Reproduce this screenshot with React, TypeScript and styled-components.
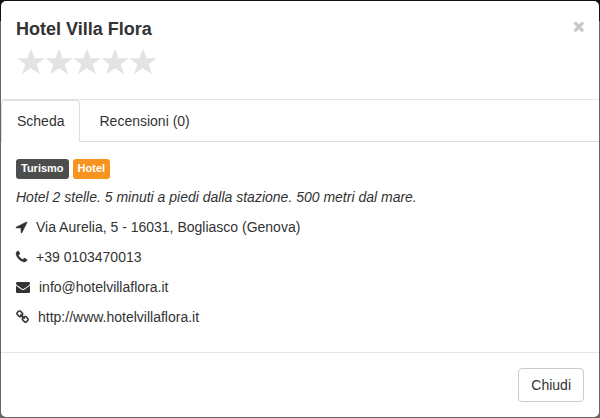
import React from "react";
import styled, { createGlobalStyle } from "styled-components";

const GlobalStyle = createGlobalStyle`
  *, *::before, *::after { box-sizing: border-box; }
  body {
    margin: 0;
    background: linear-gradient(#111 0 21px, #666 21px) no-repeat #666;
    color: #333;
    font-family: "Liberation Sans", Arial, sans-serif;
    font-size: 14px;
    line-height: 20px;
  }
`;

const Dialog = styled.section`
  margin: 1px;
  background: #fff;
  border-radius: 5px;
`;

const Header = styled.header`
  display: flex;
  justify-content: space-between;
  align-items: flex-start;
  padding: 15px 15px 19px;
  border-bottom: 1px solid #e5e5e5;
`;

const Title = styled.h4`
  margin: 0;
  font-size: 18px;
  line-height: 26px;
  font-weight: 700;
`;

const Stars = styled.div`
  display: flex;
  padding: 4px 0;
`;

const Star = styled.svg`
  display: block;
  width: 28px;
  height: 30px;
  overflow: visible;
  fill: #e3e3e3;
`;

const CloseButton = styled.button`
  padding: 0;
  border: 0;
  background: none;
  color: #c8c8c8;
  font: 700 18px/22px "Liberation Sans", Arial, sans-serif;
  -webkit-text-stroke: 1px #c8c8c8;
  cursor: pointer;
`;

const Tabs = styled.div`
  display: flex;
  gap: 3px;
  border-bottom: 1px solid #ddd;
`;

const Tab = styled.button<{ $active?: boolean }>`
  margin-bottom: -1px;
  padding: 10px 15px;
  border: 1px solid ${(p) => (p.$active ? "#ddd" : "transparent")};
  border-bottom-color: ${(p) => (p.$active ? "#fff" : "transparent")};
  border-radius: 4px 4px 0 0;
  background: ${(p) => (p.$active ? "#fff" : "transparent")};
  color: #333;
  font: inherit;
  cursor: pointer;
`;

const Panel = styled.div`
  padding: 17px 15px 25px;
`;

const Labels = styled.div`
  display: flex;
  gap: 4px;
  margin-bottom: 8px;
`;

const Label = styled.span<{ $color: string }>`
  padding: 0 5px 1px;
  border-radius: 3px;
  background: ${(p) => p.$color};
  color: #fff;
  font-size: 11px;
  line-height: 19px;
  font-weight: 700;
`;

const Details = styled.div`
  display: flex;
  flex-direction: column;
  gap: 10px;
`;

const Description = styled.p`
  margin: 0;
  font-style: italic;
`;

const Contact = styled.div`
  display: flex;
  align-items: center;
  gap: 9px;
`;

const ContactIcon = styled.svg`
  flex: none;
  height: 14px;
  overflow: visible;
  fill: currentColor;
  stroke: currentColor;
`;

const ContactLink = styled.a`
  color: inherit;
  text-decoration: none;
`;

const Footer = styled.footer`
  display: flex;
  justify-content: flex-end;
  padding: 15px;
  border-top: 1px solid #e5e5e5;
`;

const Button = styled.button`
  padding: 6px 12px;
  border: 1px solid #ccc;
  border-radius: 4px;
  background: #fff;
  color: #333;
  font: inherit;
  cursor: pointer;
`;

const icons = {
  arrow: {
    width: 11,
    stroke: 60,
    viewBox: "192 0 1408 1792",
    d: "M1593 349l-640 1280q-17 35-57 35-5 0-15-2-22-5-35.500-22.500t-13.500-39.500v-576h-576q-22 0-39.500-13.500t-22.500-35.500 4-42 29-30l1280-640q13-7 29-7 27 0 45 19 15 14 18.500 34.500t-6.500 39.500z",
  },
  phone: {
    width: 11,
    stroke: 40,
    viewBox: "192 0 1408 1792",
    d: "M1600 1240q0 27-10 70.500t-21 68.500q-21 50-122 106-94 51-186 51-27 0-53-3.500t-57.500-12.500-47-14.500-55.500-20.500-49-18q-98-35-175-83-127-79-264-216t-216-264q-48-77-83-175-3-9-18-49t-20.500-55.500-14.500-47-12.500-57.500-3.500-53q0-92 51-186 56-101 106-122 25-11 68.500-21t70.500-10q14 0 21 3 18 6 53 76 11 19 30 54t35 63.500 31 53.500q3 4 17.500 25t21.500 35.500 7 28.500q0 20-28.500 50t-62 55-62 53-28.500 46q0 9 5 22.500t8.500 20.500 14 24 11.500 19q76 137 174 235t235 174q2 1 19 11.500t24 14 20.500 8.500 22.500 5q18 0 46-28.500t53-62 55-62 50-28.500q14 0 28.500 7t35.500 21.500 25 17.500q25 15 53.500 31t63.500 35 54 30q70 35 76 53 3 7 3 21z",
  },
  envelope: {
    width: 14,
    stroke: 0,
    viewBox: "0 0 1792 1792",
    d: "M1792 710v794q0 66-47 113t-113 47h-1472q-66 0-113-47t-47-113v-794q44 49 101 87 362 246 497 345 57 42 92.500 65.500t94.500 48 110 24.500h2q51 0 110-24.500t94.500-48 92.500-65.500q170-123 498-345 57-39 100-87zm0-294q0 79-49 151t-122 123q-376 261-468 325-10 7-42.500 31t-54 38.500-52 32.500-57.500 27-50 9h-2q-23 0-50-9t-57.500-27-52-32.500-54-38.500-42.500-31q-91-64-262-182.500t-205-142.500q-62-42-117-115.500t-55-136.500q0-78 41.500-130t118.500-52h1472q65 0 112.500 47t47.500 113z",
  },
  chain: {
    width: 13,
    stroke: 20,
    viewBox: "64 0 1664 1792",
    d: "M1520 1216q0-40-28-68l-208-208q-28-28-68-28-42 0-72 32 3 3 19 18.500t21.500 21.500 15 19 13 25.500 3.500 27.500q0 40-28 68t-68 28q-15 0-27.500-3.500t-25.500-13-19-15-21.500-21.500-18.500-19q-33 31-33 73 0 40 28 68l206 207q27 27 68 27 40 0 68-26l147-146q28-28 28-67zm-703-705q0-40-28-68l-206-207q-28-28-68-28-39 0-68 27l-147 146q-28 28-28 67 0 40 28 68l208 208q27 27 68 27 42 0 72-31-3-3-19-18.500t-21.500-21.500-15-19-13-25.500-3.500-27.500q0-40 28-68t68-28q15 0 27.500 3.500t25.500 13 19 15 21.500 21.500 18.500 19q33-31 33-73zm895 705q0 120-85 203l-147 146q-83 83-203 83-121 0-204-85l-206-207q-83-83-83-203 0-123 88-209l-88-88q-86 88-208 88-120 0-204-84l-208-208q-84-84-84-204t85-203l147-146q83-83 203-83 121 0 204 85l206 207q83 83 83 203 0 123-88 209l88 88q86-88 208-88 120 0 204 84l208 208q84 84 84 204z",
  },
};

function Icon({ name }: { name: keyof typeof icons }) {
  const { width, stroke, viewBox, d } = icons[name];
  return (
    <ContactIcon width={width} viewBox={viewBox} strokeWidth={stroke} aria-hidden="true">
      <path d={d} />
    </ContactIcon>
  );
}

export default function App() {
  return (
    <>
      <GlobalStyle />
      <Dialog role="dialog" aria-labelledby="hotel-title">
        <Header>
          <div>
            <Title id="hotel-title">Hotel Villa Flora</Title>
            <Stars role="img" aria-label="0 / 5">
              {[1, 2, 3, 4, 5].map((n) => (
                <Star key={n} viewBox="0 0 28 30">
                  <path d="M15 2.500L18.500 12.200H29L20.600 18.300L24 28.200L15 22.200L6 28.200L9.400 18.300L1 12.200H11.500Z" />
                </Star>
              ))}
            </Stars>
          </div>
          <CloseButton type="button" aria-label="Chiudi">×</CloseButton>
        </Header>
        <Tabs role="tablist">
          <Tab type="button" role="tab" id="tab-scheda" aria-selected="true" aria-controls="panel-scheda" $active>
            Scheda
          </Tab>
          <Tab type="button" role="tab" aria-selected="false">
            Recensioni (0)
          </Tab>
        </Tabs>
        <Panel role="tabpanel" id="panel-scheda" aria-labelledby="tab-scheda">
          <Labels>
            <Label $color="#4d4d4d">Turismo</Label>
            <Label $color="#f7931e">Hotel</Label>
          </Labels>
          <Details>
            <Description>Hotel 2 stelle. 5 minuti a piedi dalla stazione. 500 metri dal mare.</Description>
            <Contact>
              <Icon name="arrow" />
              <span>Via Aurelia, 5 - 16031, Bogliasco (Genova)</span>
            </Contact>
            <Contact>
              <Icon name="phone" />
              <span>+39 0103470013</span>
            </Contact>
            <Contact>
              <Icon name="envelope" />
              <ContactLink href="mailto:info@hotelvillaflora.it">info@hotelvillaflora.it</ContactLink>
            </Contact>
            <Contact>
              <Icon name="chain" />
              <ContactLink href="http://www.hotelvillaflora.it">http://www.hotelvillaflora.it</ContactLink>
            </Contact>
          </Details>
        </Panel>
        <Footer>
          <Button type="button">Chiudi</Button>
        </Footer>
      </Dialog>
    </>
  );
}
